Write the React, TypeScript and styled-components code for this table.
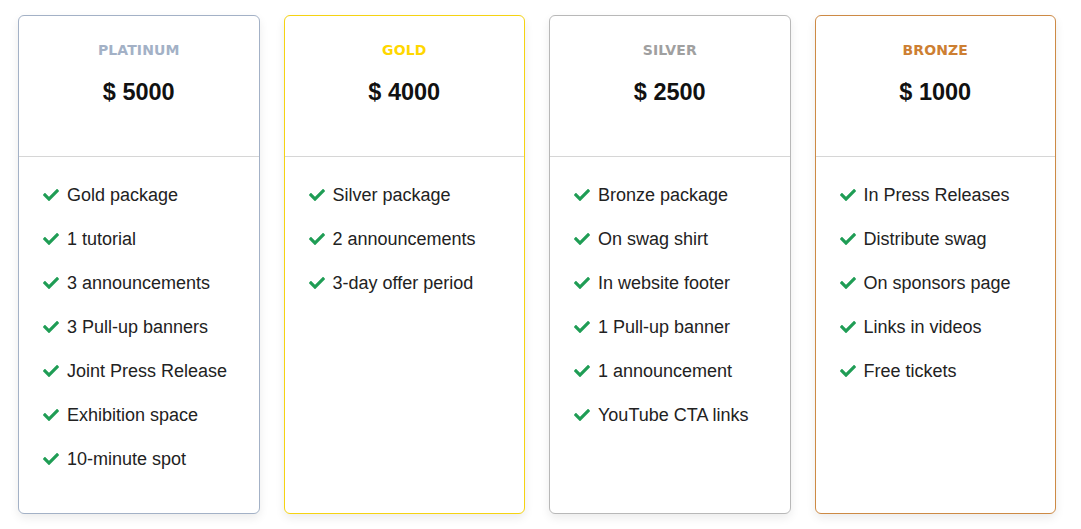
import React from "react";
import styled, { createGlobalStyle } from "styled-components";
import { FaCheck } from "react-icons/fa";

const Global = createGlobalStyle`
  html, body { margin: 0; padding: 0; background: #fff; }
  body { font-family: "Liberation Sans", Arial, sans-serif; }
`;

const Page = styled.div`
  display: grid;
  grid-template-columns: repeat(4, 1fr);
  gap: 24px;
  width: 1038px;
  padding: 15px 18px 16px;
`;

const Card = styled.div<{ $c: string }>`
  display: flex;
  flex-direction: column;
  border: 1px solid ${(p) => p.$c};
  border-radius: 6px;
  background: #fff;
  box-shadow: 0 4px 10px rgba(0, 0, 0, 0.08);
  overflow: hidden;
`;

const Header = styled.div`
  height: 141px;
  box-sizing: border-box;
  border-bottom: 1px solid #d6d6d6;
  display: flex;
  flex-direction: column;
  align-items: center;
  padding-top: 26px;
`;

const Tier = styled.div<{ $c: string }>`
  color: ${(p) => p.$c};
  font-family: "DejaVu Sans", sans-serif;
  font-weight: 700;
  font-size: 14px;
  letter-spacing: 0.1px;
  line-height: 16px;
`;

const Price = styled.div`
  margin-top: 20px;
  font-size: 23.5px;
  font-weight: 700;
  color: #111;
  line-height: 28px;
`;

const List = styled.ul`
  list-style: none;
  margin: 0;
  padding: 16px 24px 32px;
`;

const Item = styled.li`
  display: flex;
  align-items: center;
  gap: 8px;
  height: 44px;
  font-size: 18px;
  color: #222;
`;

const Check = styled(FaCheck)`
  color: #1f9d55;
  width: 16px;
  height: 16px;
  flex: none;
`;

const tiers = [
  {
    name: "PLATINUM",
    color: "#a3b1c6",
    price: "$ 5000",
    items: [
      "Gold package",
      "1 tutorial",
      "3 announcements",
      "3 Pull-up banners",
      "Joint Press Release",
      "Exhibition space",
      "10-minute spot",
    ],
  },
  {
    name: "GOLD",
    color: "#f5d312",
    titleColor: "#ffd700",
    price: "$ 4000",
    items: ["Silver package", "2 announcements", "3-day offer period"],
  },
  {
    name: "SILVER",
    color: "#b8b8b8",
    titleColor: "#a0a0a0",
    price: "$ 2500",
    items: [
      "Bronze package",
      "On swag shirt",
      "In website footer",
      "1 Pull-up banner",
      "1 announcement",
      "YouTube CTA links",
    ],
  },
  {
    name: "BRONZE",
    color: "#cd8a45",
    titleColor: "#cd7f32",
    price: "$ 1000",
    items: [
      "In Press Releases",
      "Distribute swag",
      "On sponsors page",
      "Links in videos",
      "Free tickets",
    ],
  },
];

export default function App() {
  return (
    <>
      <Global />
      <Page>
        {tiers.map((t) => (
          <Card key={t.name} $c={t.color}>
            <Header>
              <Tier $c={t.titleColor ?? t.color}>{t.name}</Tier>
              <Price>{t.price}</Price>
            </Header>
            <List>
              {t.items.map((i) => (
                <Item key={i}>
                  <Check />
                  {i}
                </Item>
              ))}
            </List>
          </Card>
        ))}
      </Page>
    </>
  );
}
